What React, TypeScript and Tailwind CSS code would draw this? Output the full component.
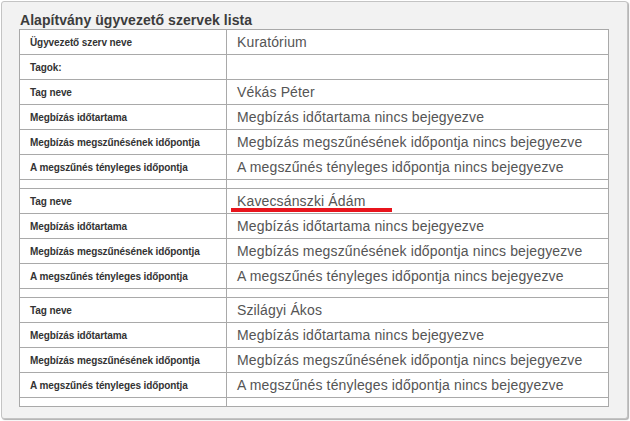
import React from "react";

type Row = { label: string; value?: string; spacer?: boolean; underline?: boolean };

const rows: Row[] = [
  { label: "Ügyvezető szerv neve", value: "Kuratórium" },
  { label: "Tagok:", value: "" },
  { label: "Tag neve", value: "Vékás Péter" },
  { label: "Megbízás időtartama", value: "Megbízás időtartama nincs bejegyezve" },
  { label: "Megbízás megszűnésének időpontja", value: "Megbízás megszűnésének időpontja nincs bejegyezve" },
  { label: "A megszűnés tényleges időpontja", value: "A megszűnés tényleges időpontja nincs bejegyezve" },
  { label: "", spacer: true },
  { label: "Tag neve", value: "Kavecsánszki Ádám", underline: true },
  { label: "Megbízás időtartama", value: "Megbízás időtartama nincs bejegyezve" },
  { label: "Megbízás megszűnésének időpontja", value: "Megbízás megszűnésének időpontja nincs bejegyezve" },
  { label: "A megszűnés tényleges időpontja", value: "A megszűnés tényleges időpontja nincs bejegyezve" },
  { label: "", spacer: true },
  { label: "Tag neve", value: "Szilágyi Ákos" },
  { label: "Megbízás időtartama", value: "Megbízás időtartama nincs bejegyezve" },
  { label: "Megbízás megszűnésének időpontja", value: "Megbízás megszűnésének időpontja nincs bejegyezve" },
  { label: "A megszűnés tényleges időpontja", value: "A megszűnés tényleges időpontja nincs bejegyezve" },
  { label: "", spacer: true },
];

export default function App() {
  return (
    <div className="w-[630px] h-[421px] bg-white pl-[1px] pt-[1px]" style={{ fontFamily: '"Liberation Sans", Arial, sans-serif' }}>
      <div className="w-[627px] h-[418px] bg-[#f2f2f2] border border-[#c4c4c4] rounded-[3px] shadow-[1px_1px_1px_#b0b0b0] pl-[17px] pt-[10px]">
        <div className="text-[14px] font-bold text-[#3c3c3c] leading-[17px] pl-[1px] tracking-[0.05px]">
          Alapítvány ügyvezető szervek lista
        </div>
        <div className="w-[590px] bg-white border-t border-x border-[#a9a9a9]">
          {rows.map((r, i) => (
            <div
              key={i}
              className={`relative flex border-b border-[#a9a9a9] ${r.spacer ? "h-[9px]" : "h-[25px]"}`}
            >
              <div className="w-[207px] shrink-0 border-r border-[#a9a9a9] pl-[10px] flex items-center text-[10px] font-bold text-[#333] tracking-[-0.1px]">
                {r.label}
              </div>
              <div className="flex-1 pl-[10px] flex items-center text-[14px] text-[#555] tracking-[0.14px]">
                {r.value}
              </div>
              {r.underline && (
                <div className="absolute left-[211px] w-[161px] top-[19px] h-[4px] bg-[#e8141c]" />
              )}
            </div>
          ))}
        </div>
      </div>
    </div>
  );
}
